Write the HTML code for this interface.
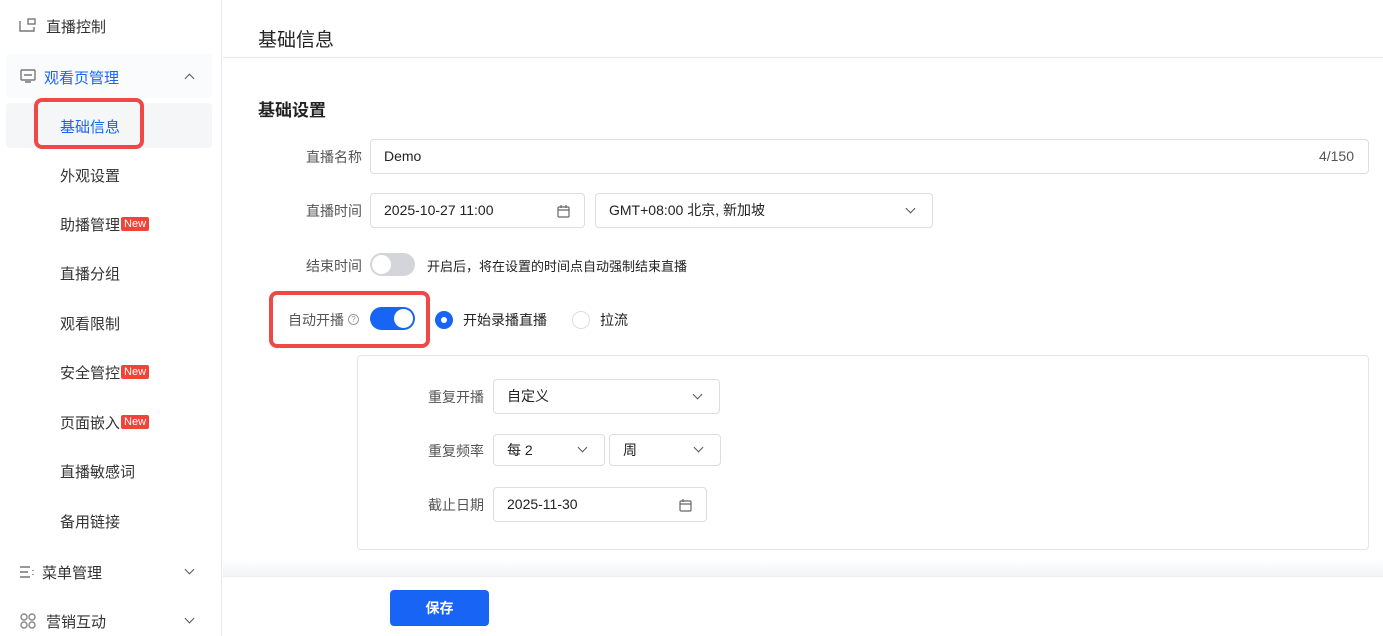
<!DOCTYPE html><html><head><meta charset="utf-8"><style>
*{box-sizing:border-box;margin:0;padding:0}
body{width:1383px;height:636px;overflow:hidden;font-family:"Liberation Sans","Noto Sans CJK SC",sans-serif;font-size:14px;color:#333;background:#fff;position:relative}
.a{position:absolute}
.side{left:0;top:0;width:222px;height:636px;border-right:1px solid #e8e8ee}
.mi{position:absolute;left:0;width:222px;font-size:15px;color:#333}
.sub{position:absolute;left:60px;font-size:15px;color:#333}
.new{display:inline-block;background:#f04438;color:#fff;font-size:11px;line-height:14px;padding:0 3px;border-radius:2px;vertical-align:3px;margin-left:1px}
.lbl{position:absolute;font-size:14px;color:#555;text-align:right}
.inp{position:absolute;border:1px solid #dcdde0;border-radius:4px;background:#fff;font-size:14px;color:#222;padding-left:13px;line-height:33px}
.chev{position:absolute;width:7px;height:7px;border-right:1.6px solid #555;border-bottom:1.6px solid #555;transform:rotate(45deg)}
</style></head><body>
<div class="a side">
 <div class="mi" style="top:16px"><svg class="a" style="left:19px;top:2px" width="17" height="15" viewBox="0 0 17 15" fill="none" stroke="#777" stroke-width="1.4"><path d="M1 3v10h14V9"/><rect x="9" y="1" width="7" height="5"/></svg><span class="a" style="left:46px">直播控制</span></div>
 <div class="a" style="left:6px;top:54px;width:206px;height:44px;background:#fafbfc;border-radius:4px"></div>
 <div class="mi" style="top:67px;color:#1764f5"><svg class="a" style="left:20px;top:2px" width="16" height="14" viewBox="0 0 16 14" fill="none" stroke="#777" stroke-width="1.4"><rect x="1" y="1" width="14" height="10" rx="1"/><path d="M4 6h8M5 13h6"/></svg><span class="a" style="left:44px">观看页管理</span><div class="chev" style="left:186px;top:8px;transform:rotate(-135deg)"></div></div>
 <div class="a" style="left:6px;top:103px;width:206px;height:45px;background:#f5f6f8;border-radius:4px"></div>
 <div class="a" style="left:34px;top:98px;width:110px;height:51px;border:4px solid #f04747;border-radius:8px"></div>
 <div class="sub" style="top:116px;color:#1764f5">基础信息</div>
 <div class="sub" style="top:165px">外观设置</div>
 <div class="sub" style="top:214px">助播管理<span class="new">New</span></div>
 <div class="sub" style="top:263px">直播分组</div>
 <div class="sub" style="top:313px">观看限制</div>
 <div class="sub" style="top:362px">安全管控<span class="new">New</span></div>
 <div class="sub" style="top:412px">页面嵌入<span class="new">New</span></div>
 <div class="sub" style="top:461px">直播敏感词</div>
 <div class="sub" style="top:511px">备用链接</div>
 <div class="mi" style="top:562px"><svg class="a" style="left:19px;top:4px" width="16" height="12" viewBox="0 0 16 12" stroke="#777" stroke-width="1.4"><path d="M1 1h10M1 6h8M1 11h10M14 4v1M14 8v1"/></svg><span class="a" style="left:42px">菜单管理</span><div class="chev" style="left:186px;top:4px"></div></div>
 <div class="mi" style="top:611px"><svg class="a" style="left:20px;top:2px" width="16" height="16" viewBox="0 0 16 16" fill="none" stroke="#888" stroke-width="1.4"><circle cx="4" cy="4" r="3"/><circle cx="12" cy="4" r="3"/><circle cx="4" cy="12" r="3"/><circle cx="12" cy="12" r="3"/></svg><span class="a" style="left:46px">营销互动</span><div class="chev" style="left:186px;top:4px"></div></div>
</div>
<div class="a" style="left:258px;top:25px;font-size:19px;color:#222">基础信息</div>
<div class="a" style="left:223px;top:57px;width:1160px;height:1px;background:#e8e8ee"></div>
<div class="a" style="left:258px;top:96px;font-size:17px;font-weight:bold;color:#222">基础设置</div>
<div class="lbl" style="left:290px;top:147px;width:72px">直播名称</div>
<div class="inp" style="left:370px;top:139px;width:999px;height:35px">Demo<span class="a" style="right:14px;top:0;color:#555">4/150</span></div>
<div class="lbl" style="left:290px;top:201px;width:72px">直播时间</div>
<div class="inp" style="left:370px;top:193px;width:215px;height:35px">2025-10-27 11:00<svg class="a" style="left:186px;top:11px" width="13" height="13" viewBox="0 0 13 13" fill="none" stroke="#666" stroke-width="1.2"><rect x="1" y="2" width="11" height="10" rx="1"/><path d="M1 5h11M4 0v3M9 0v3"/></svg></div>
<div class="inp" style="left:595px;top:193px;width:338px;height:35px">GMT+08:00 北京, 新加坡<div class="chev" style="left:311px;top:11px"></div></div>
<div class="lbl" style="left:290px;top:256px;width:72px">结束时间</div>
<div class="a" style="left:370px;top:253px;width:45px;height:23px;border-radius:12px;background:#d3d5da"><div class="a" style="left:2px;top:2px;width:19px;height:19px;border-radius:50%;background:#fff"></div></div>
<div class="a" style="left:427px;top:256px;font-size:13px;color:#222">开启后，将在设置的时间点自动强制结束直播</div>
<div class="a" style="left:269px;top:291px;width:161px;height:57px;border:4px solid #f04747;border-radius:8px"></div>
<div class="lbl" style="left:288px;top:310px;font-size:14px">自动开播</div>
<div class="a" style="left:348px;top:314px;width:11px;height:11px;border:1px solid #999;border-radius:50%;font-size:8px;line-height:9px;text-align:center;color:#999">?</div>
<div class="a" style="left:370px;top:307px;width:45px;height:23px;border-radius:12px;background:#1764f5"><div class="a" style="left:24px;top:2px;width:19px;height:19px;border-radius:50%;background:#fff"></div></div>
<div class="a" style="left:435px;top:311px;width:18px;height:18px;border-radius:50%;background:#1764f5"><div class="a" style="left:6px;top:6px;width:6px;height:6px;border-radius:50%;background:#fff"></div></div>
<div class="a" style="left:463px;top:310px;font-size:14px;color:#222">开始录播直播</div>
<div class="a" style="left:572px;top:311px;width:18px;height:18px;border-radius:50%;border:1px solid #dcdde0"></div>
<div class="a" style="left:600px;top:310px;font-size:14px;color:#222">拉流</div>
<div class="a" style="left:357px;top:355px;width:1012px;height:195px;border:1px solid #e3e4e8;border-radius:4px"></div>
<div class="lbl" style="left:420px;top:387px;width:64px">重复开播</div>
<div class="inp" style="left:493px;top:379px;width:227px;height:35px">自定义<div class="chev" style="left:200px;top:11px"></div></div>
<div class="lbl" style="left:420px;top:441px;width:64px">重复频率</div>
<div class="inp" style="left:493px;top:434px;width:112px;height:32px;line-height:30px">每 2<div class="chev" style="left:85px;top:9px"></div></div>
<div class="inp" style="left:609px;top:434px;width:112px;height:32px;line-height:30px">周<div class="chev" style="left:85px;top:9px"></div></div>
<div class="lbl" style="left:420px;top:495px;width:64px">截止日期</div>
<div class="inp" style="left:493px;top:487px;width:214px;height:35px">2025-11-30<svg class="a" style="left:185px;top:11px" width="13" height="13" viewBox="0 0 13 13" fill="none" stroke="#666" stroke-width="1.2"><rect x="1" y="2" width="11" height="10" rx="1"/><path d="M1 5h11M4 0v3"/></svg></div>
<div class="a" style="left:223px;top:560px;width:1160px;height:16px;background:linear-gradient(#fff,#f3f4f6)"></div>
<div class="a" style="left:223px;top:576px;width:1160px;height:1px;background:#eceef1"></div>
<div class="a" style="left:390px;top:590px;width:99px;height:36px;background:#1764f5;border-radius:4px;color:#fff;font-weight:bold;text-align:center;line-height:36px;font-size:14px">保存</div>
</body></html>
